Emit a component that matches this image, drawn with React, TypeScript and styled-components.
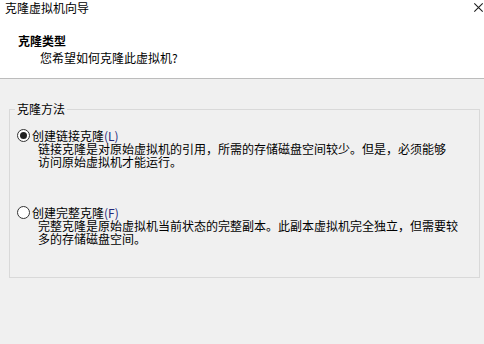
import styled, { createGlobalStyle } from 'styled-components';

const GlobalStyle = createGlobalStyle`
  html, body {
    margin: 0;
    padding: 0;
    background: #f0f0f0;
  }
  body {
    font-family: "Noto Sans CJK SC", "Noto Sans", sans-serif;
    font-size: 12px;
    color: #000;
  }
`;

const options = [
  {
    id: 'linked',
    label: '创建链接克隆',
    key: 'L',
    checked: true,
    lines: [
      '链接克隆是对原始虚拟机的引用，所需的存储磁盘空间较少。但是，必须能够',
      '访问原始虚拟机才能运行。',
    ],
  },
  {
    id: 'full',
    label: '创建完整克隆',
    key: 'F',
    checked: false,
    lines: [
      '完整克隆是原始虚拟机当前状态的完整副本。此副本虚拟机完全独立，但需要较',
      '多的存储磁盘空间。',
    ],
  },
];

const App = () => {
  return (
    <>
      <GlobalStyle />
      <Dialog>
        <Header>
          <TitleBar>
            <Title>克隆虚拟机向导</Title>
            <CloseButton aria-label='关闭'>
              <CloseIcon viewBox='0 0 9 9'>
                <path d='M0.3 0.3 L8.7 8.7 M8.7 0.3 L0.3 8.7' />
              </CloseIcon>
            </CloseButton>
          </TitleBar>
          <PageTitle>克隆类型</PageTitle>
          <PageSubtitle>您希望如何克隆此虚拟机?</PageSubtitle>
        </Header>
        <Body>
          <GroupBox>
            <Legend>克隆方法</Legend>
            <OptionList>
              {options.map((opt) => (
                <Option key={opt.id}>
                  <RadioRow>
                    <RadioMark $checked={opt.checked} />
                    <RadioLabel>
                      {opt.label}
                      <Accel>({opt.key})</Accel>
                    </RadioLabel>
                  </RadioRow>
                  <Description>
                    {opt.lines.map((line) => (
                      <DescLine key={line}>{line}</DescLine>
                    ))}
                  </Description>
                </Option>
              ))}
            </OptionList>
          </GroupBox>
        </Body>
      </Dialog>
    </>
  );
};

const Dialog = styled.div`
  width: 484px;
  height: 344px;
  display: flex;
  flex-direction: column;
  background: #f0f0f0;
  overflow: hidden;
`;

const Header = styled.header`
  height: 78px;
  background: #fff;
  border-bottom: 1px solid #bcbcbc;
  display: flex;
  flex-direction: column;
`;

const TitleBar = styled.div`
  display: flex;
  align-items: flex-start;
  justify-content: space-between;
  padding: 1px 1px 0 5px;
  height: 14px;
`;

const Title = styled.div`
  line-height: 13px;
`;

const CloseButton = styled.div`
  width: 9px;
  height: 9px;
  margin-top: 2px;
  flex: 0 0 9px;
`;

const CloseIcon = styled.svg`
  display: block;
  width: 9px;
  height: 9px;
  overflow: visible;

  path {
    stroke: #1e1e1e;
    stroke-width: 1.1;
    fill: none;
  }
`;

const PageTitle = styled.h1`
  margin: 19px 0 0 18px;
  font-size: 12px;
  font-weight: 700;
  line-height: 14px;
`;

const PageSubtitle = styled.p`
  margin: 3px 0 0 40px;
  line-height: 14px;
`;

const Body = styled.main`
  flex: 1;
  padding: 23px 4px 0 9px;
`;

const GroupBox = styled.fieldset`
  margin: 0;
  padding: 0 0 32px 7px;
  width: 471px;
  box-sizing: border-box;
  border: 1px solid #d9d9d9;
  min-inline-size: 0;
`;

const Legend = styled.legend`
  margin-left: -2px;
  padding: 0 2px;
  line-height: 14px;
`;

const OptionList = styled.div`
  display: flex;
  flex-direction: column;
  gap: 38px;
  padding-top: 13px;
`;

const Option = styled.div`
  display: flex;
  flex-direction: column;
`;

const RadioRow = styled.div`
  display: flex;
  align-items: center;
  gap: 2px;
  height: 13px;
`;

const RadioMark = styled.span<{ $checked: boolean }>`
  width: 13px;
  height: 13px;
  box-sizing: border-box;
  border-radius: 50%;
  border: 1px solid #333;
  background: #fff;
  display: flex;
  align-items: center;
  justify-content: center;
  flex-shrink: 0;

  &::after {
    content: '';
    width: 7px;
    height: 7px;
    border-radius: 50%;
    background: #222;
    display: ${(p) => (p.$checked ? 'block' : 'none')};
  }
`;

const RadioLabel = styled.span`
  line-height: 13px;
  white-space: nowrap;
`;

const Accel = styled.span`
  color: #23287a;
`;

const Description = styled.div`
  padding-left: 21px;
  display: flex;
  flex-direction: column;
`;

const DescLine = styled.span`
  line-height: 13px;
  white-space: nowrap;
`;

export default App;
